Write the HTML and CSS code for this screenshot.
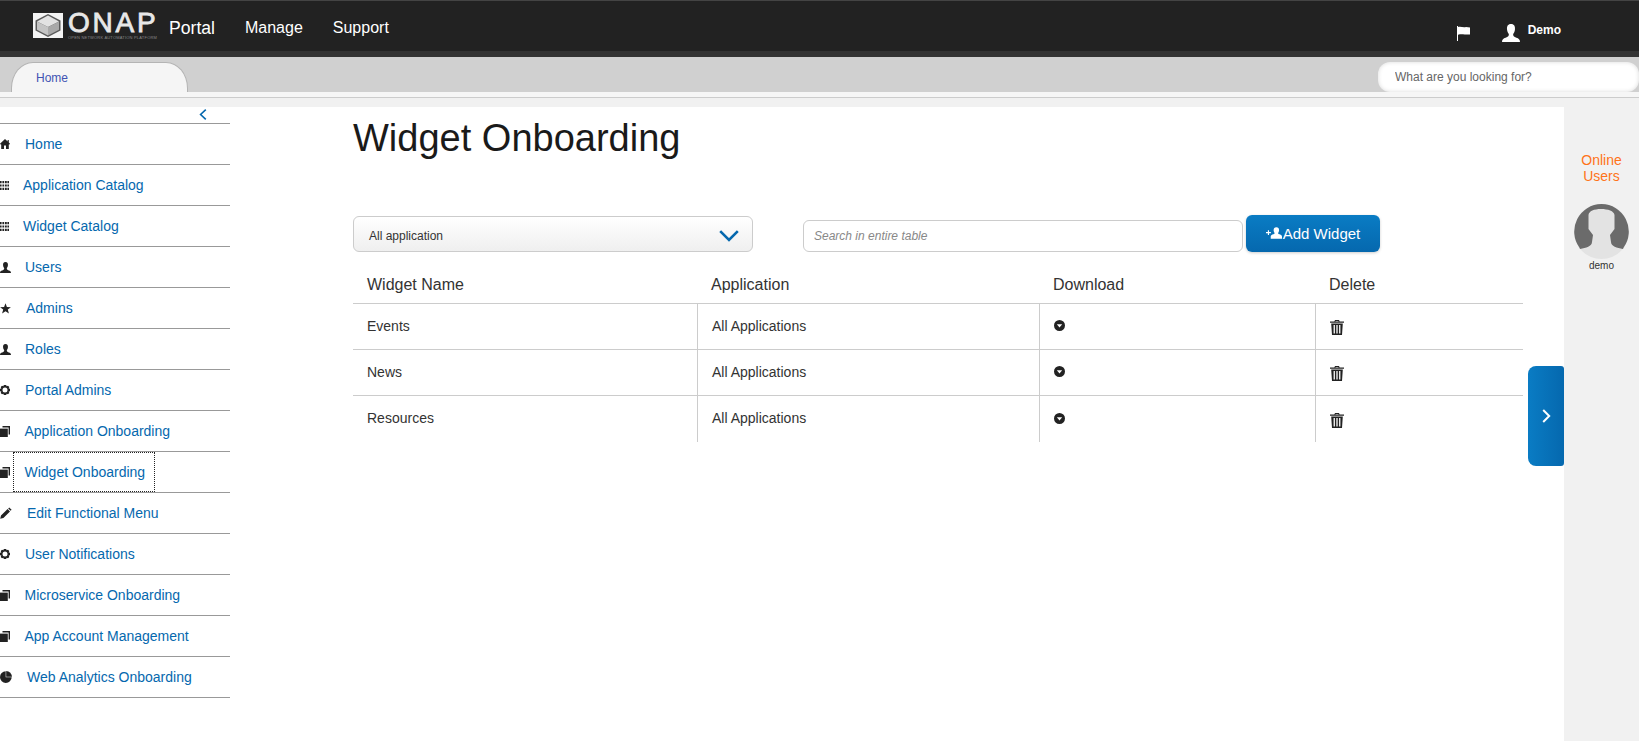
FILE: index.html
```html
<!DOCTYPE html>
<html lang="en">
<head>
    <meta charset="UTF-8">
    <meta name="viewport" content="width=device-width, initial-scale=1.0">
    <title>Widget Onboarding</title>
    <link rel="stylesheet" href="styles.css">
</head>
<body>
    <!-- shared icons -->
    <svg class="sprite" xmlns="http://www.w3.org/2000/svg">
        <symbol id="i-home" viewBox="0 0 10 10"><path d="M5 0 L7.6 2.4 V1 H8.8 V3.5 L10 4.7 L9.4 5.6 H8.8 V10 H6 V6.6 H4 V10 H1.2 V5.6 H.6 L0 4.7 Z"/></symbol>
        <symbol id="i-grid" viewBox="0 0 9 9"><path d="M0 0h1.6v2.2H0zM2.4 0h1.8v2.2H2.4zM5 0h1.8v2.2H5zM7.4 0H9v2.2H7.4zM0 3.4h1.6v2.2H0zM2.4 3.4h1.8v2.2H2.4zM5 3.4h1.8v2.2H5zM7.4 3.4H9v2.2H7.4zM0 6.8h1.6V9H0zM2.4 6.8h1.8V9H2.4zM5 6.8h1.8V9H5zM7.4 6.8H9V9H7.4z"/></symbol>
        <symbol id="i-user" viewBox="0 0 10 10"><path d="M5 0 C6.8 0 7.4 1.4 7.2 3 C7.1 4.2 6.6 5 6.2 5.6 C6.1 6.6 6.6 7.2 8 7.7 C9.2 8.1 10 8.6 10 10 H0 C0 8.6 .8 8.1 2 7.7 C3.4 7.2 3.9 6.6 3.8 5.6 C3.4 5 2.9 4.2 2.8 3 C2.6 1.4 3.2 0 5 0 Z"/></symbol>
        <symbol id="i-star" viewBox="0 0 11 11"><path d="M5.5 .3 L6.9 4 L10.9 4.2 L7.8 6.6 L8.9 10.5 L5.5 8.3 L2.1 10.5 L3.2 6.6 L.1 4.2 L4.1 4 Z"/></symbol>
        <symbol id="i-gear" viewBox="0 0 10 10"><path fill-rule="evenodd" d="M3.8 0 H6.2 L6.6 1.3 L8 .7 L9.3 2 L8.7 3.4 L10 3.8 V6.2 L8.7 6.6 L9.3 8 L8 9.3 L6.6 8.7 L6.2 10 H3.8 L3.4 8.7 L2 9.3 L.7 8 L1.3 6.6 L0 6.2 V3.8 L1.3 3.4 L.7 2 L2 .7 L3.4 1.3 Z M5 2.5 A2.5 2.5 0 1 0 5 7.5 A2.5 2.5 0 1 0 5 2.5 Z"/></symbol>
        <symbol id="i-stack" viewBox="0 0 10 11"><path d="M0 2.6 H7.8 V11 H0 Z"/><path d="M2.5 0 H10 V8.4 H8.6 V1.6 H2.5 Z"/></symbol>
        <symbol id="i-pencil" viewBox="0 0 12 12"><path d="M9.2 .4 L11.6 2.8 L10.6 3.8 L8.2 1.4 Z M7.6 2 L10 4.4 L3.4 11 L.2 11.8 L1 8.6 Z"/></symbol>
        <symbol id="i-pie" viewBox="0 0 12 12"><path d="M5.7 .3 V6.3 H11.7 A5.85 5.85 0 1 1 5.7 .3 Z"/><path d="M6.2 0 A5.8 5.8 0 0 1 12 5.8 H6.2 Z"/></symbol>
        <symbol id="i-down" viewBox="0 0 11 11"><path fill-rule="evenodd" d="M5.5 0 A5.5 5.5 0 1 1 5.5 11 A5.5 5.5 0 1 1 5.5 0 Z M2.8 4.2 L5.5 7.4 L8.2 4.2 Z"/></symbol>
        <symbol id="i-trash" viewBox="0 0 14 15"><path fill-rule="evenodd" d="M5 0 H9 L9.6 1.4 H14 V2.8 H0 V1.4 H4.4 Z M5.6 .9 L5.4 1.4 H8.6 L8.4 .9 Z M1.2 3.6 H12.8 L12 15 H2 Z M3.6 5 V13.4 H4.9 V5 Z M6.35 5 V13.4 H7.65 V5 Z M9.1 5 V13.4 H10.4 V5 Z"/></symbol>
    </svg>

    <header class="top-bar">
        <div class="logo">
            <svg class="logo-mark" viewBox="0 0 30 25" xmlns="http://www.w3.org/2000/svg">
                <path fill="#f4f4f4" d="M0 0 H30 V25 H0 Z"/>
                <path fill="#5a5a5a" d="M15 1 L2.5 7.5 V17.5 L15 24 L27.5 17.5 V7.5 Z"/>
                <path fill="#e2e2e2" d="M15 2.6 L26 8.4 L15 14 L4 8.4 Z"/>
                <path fill="#c4c4c4" d="M4 8.4 L15 14 V22.4 L4 16.8 Z"/>
                <path fill="#a8a8a8" d="M26 8.4 L15 14 V22.4 L26 16.8 Z"/>
            </svg>
            <div class="logo-text">
                <span class="logo-name">ONAP</span>
                <span class="logo-sub">OPEN NETWORK AUTOMATION PLATFORM</span>
            </div>
        </div>
        <nav class="main-nav">
            <a class="main-link portal-link" href="#">Portal</a>
            <a class="main-link" href="#">Manage</a>
            <a class="main-link" href="#">Support</a>
        </nav>
        <div class="user-area">
            <svg class="flag-icon" viewBox="0 0 13 15" xmlns="http://www.w3.org/2000/svg">
                <path d="M0 0 H1 V15 H0 Z"/><path d="M1 1 C4 .2 6 1.8 9 1 L13 1.4 V8.6 L9 8.4 C6 8.6 4 8 1 8.8 Z"/>
            </svg>
            <svg class="user-icon" viewBox="0 0 10 10"><use href="#i-user"/></svg>
            <span class="user-name">Demo</span>
        </div>
    </header>

    <div class="tab-bar">
        <div class="tab">Home</div>
        <input class="global-search" type="text" placeholder="What are you looking for?">
    </div>
    <div class="tab-gap"></div>

    <div class="page">
        <aside class="sidebar">
            <div class="collapse-row">
                <svg class="collapse-icon" viewBox="0 0 8 11" xmlns="http://www.w3.org/2000/svg"><path d="M6.8 .6 L1.6 5.5 L6.8 10.4"/></svg>
            </div>
            <ul class="side-menu">
                <li class="side-item"><svg class="nav-icon"><use href="#i-home"/></svg><a class="side-link" href="#">Home</a></li>
                <li class="side-item"><svg class="nav-icon icon-grid"><use href="#i-grid"/></svg><a class="side-link" href="#">Application Catalog</a></li>
                <li class="side-item"><svg class="nav-icon icon-grid"><use href="#i-grid"/></svg><a class="side-link" href="#">Widget Catalog</a></li>
                <li class="side-item"><svg class="nav-icon icon-user"><use href="#i-user"/></svg><a class="side-link" href="#">Users</a></li>
                <li class="side-item"><svg class="nav-icon icon-star"><use href="#i-star"/></svg><a class="side-link" href="#">Admins</a></li>
                <li class="side-item"><svg class="nav-icon icon-user"><use href="#i-user"/></svg><a class="side-link" href="#">Roles</a></li>
                <li class="side-item"><svg class="nav-icon"><use href="#i-gear"/></svg><a class="side-link" href="#">Portal Admins</a></li>
                <li class="side-item"><svg class="nav-icon icon-stack"><use href="#i-stack"/></svg><a class="side-link" href="#">Application Onboarding</a></li>
                <li class="side-item"><svg class="nav-icon icon-stack"><use href="#i-stack"/></svg><a class="side-link active" href="#">Widget Onboarding</a></li>
                <li class="side-item"><svg class="nav-icon icon-wide"><use href="#i-pencil"/></svg><a class="side-link" href="#">Edit Functional Menu</a></li>
                <li class="side-item"><svg class="nav-icon"><use href="#i-gear"/></svg><a class="side-link" href="#">User Notifications</a></li>
                <li class="side-item"><svg class="nav-icon icon-stack"><use href="#i-stack"/></svg><a class="side-link" href="#">Microservice Onboarding</a></li>
                <li class="side-item"><svg class="nav-icon icon-stack"><use href="#i-stack"/></svg><a class="side-link" href="#">App Account Management</a></li>
                <li class="side-item"><svg class="nav-icon icon-wide"><use href="#i-pie"/></svg><a class="side-link" href="#">Web Analytics Onboarding</a></li>
            </ul>
        </aside>

        <main class="content">
            <h1 class="page-title">Widget Onboarding</h1>

            <div class="toolbar">
                <div class="app-select">
                    <span>All application</span>
                    <svg class="select-arrow" viewBox="0 0 20 12" xmlns="http://www.w3.org/2000/svg"><path d="M1.2 1.2 L10 10 L18.8 1.2"/></svg>
                </div>
                <input class="table-search" type="text" placeholder="Search in entire table">
                <button class="add-button">
                    <svg class="add-icon" viewBox="0 0 17 12" xmlns="http://www.w3.org/2000/svg">
                        <path d="M0 5 H2 V3 H3.2 V5 H5.2 V6.2 H3.2 V8.2 H2 V6.2 H0 Z"/>
                        <path d="M11 0 C13 0 13.9 1.3 13.9 3 C13.9 4.2 13.4 5.2 12.8 5.9 C12.8 6.6 13.4 7 14.6 7.4 C16 7.9 17 8.6 17 10 V12 H5 V10 C5 8.6 6 7.9 7.4 7.4 C8.6 7 9.2 6.6 9.2 5.9 C8.6 5.2 8.1 4.2 8.1 3 C8.1 1.3 9 0 11 0 Z"/>
                    </svg>
                    Add Widget
                </button>
            </div>

            <table class="widget-table">
                <colgroup>
                    <col class="col-name"><col class="col-app"><col class="col-download"><col class="col-delete">
                </colgroup>
                <thead>
                    <tr><th>Widget Name</th><th>Application</th><th>Download</th><th>Delete</th></tr>
                </thead>
                <tbody>
                    <tr>
                        <td>Events</td><td>All Applications</td>
                        <td><svg class="down-icon"><use href="#i-down"/></svg></td>
                        <td><svg class="trash-icon"><use href="#i-trash"/></svg></td>
                    </tr>
                    <tr>
                        <td>News</td><td>All Applications</td>
                        <td><svg class="down-icon"><use href="#i-down"/></svg></td>
                        <td><svg class="trash-icon"><use href="#i-trash"/></svg></td>
                    </tr>
                    <tr>
                        <td>Resources</td><td>All Applications</td>
                        <td><svg class="down-icon"><use href="#i-down"/></svg></td>
                        <td><svg class="trash-icon"><use href="#i-trash"/></svg></td>
                    </tr>
                </tbody>
            </table>

            <div class="drawer-toggle">
                <svg class="drawer-icon" viewBox="0 0 9 14" xmlns="http://www.w3.org/2000/svg"><path d="M1.2 1 L7.2 7 L1.2 13"/></svg>
            </div>
        </main>

        <aside class="online-panel">
            <div class="online-title">Online Users</div>
            <svg class="avatar" viewBox="0 0 55 55" xmlns="http://www.w3.org/2000/svg">
                <circle cx="27.5" cy="27.5" r="27.5" fill="#e3e3e3"/>
                <path fill="#6b6b6b" d="M27.5 0 A27.5 27.5 0 0 0 5.5 43.7 L6 45 C12 44 18 42 18 38 L19 31 L14.5 25 L14.5 11 C15 7 20 5 27 5 C34 5 40 7 40.5 11 L40.5 25 L36 31 L37 38 C37 42 43 44 49 45 L49.5 43.7 A27.5 27.5 0 0 0 27.5 0 Z"/>
            </svg>
            <div class="avatar-name">demo</div>
        </aside>
    </div>
</body>
</html>
```

FILE: styles.css
```css
* {
    box-sizing: border-box;
}

html, body {
    height: 100%;
}

body {
    font-family: 'Liberation Sans', Arial, sans-serif;
    margin: 0;
    padding: 0;
    background-color: #f1f1f1;
    color: #333;
    overflow: hidden;
    display: flex;
    flex-direction: column;
}

a {
    text-decoration: none;
}

.sprite {
    display: none;
}

/* header */
.top-bar {
    display: flex;
    align-items: center;
    height: 57px;
    flex-shrink: 0;
    padding: 0 78px 0 33px;
    background-color: #222;
    border-top: 1px solid #444;
    border-bottom: 6px solid #333;
}

.logo {
    display: flex;
    align-items: flex-start;
    margin-top: 1px;
}

.logo-mark {
    width: 30px;
    height: 25px;
    margin-right: 5px;
}

.logo-text {
    display: flex;
    flex-direction: column;
    width: 92px;
}

.logo-name {
    font-size: 28px;
    line-height: 20px;
    letter-spacing: 2.8px;
    color: #e8e8e8;
    -webkit-text-stroke: 0.8px #e8e8e8;
}

.logo-sub {
    font-size: 4px;
    line-height: 5px;
    margin-top: 2px;
    letter-spacing: 0.2px;
    color: #888;
    white-space: nowrap;
}

.main-nav {
    display: flex;
    align-items: center;
    margin-left: 9px;
    margin-top: 4px;
}

.main-link {
    color: #fff;
    font-size: 16px;
    margin-right: 30px;
}

.portal-link {
    font-size: 17.6px;
}

.user-area {
    display: flex;
    align-items: center;
    margin-left: auto;
    padding-top: 8px;
}

.flag-icon {
    width: 13px;
    height: 15px;
    fill: #fff;
    margin-top: 7px;
    margin-right: 32px;
}

.user-icon {
    width: 18px;
    height: 18px;
    fill: #fff;
    margin-top: 5px;
    margin-right: 8px;
}

.user-name {
    font-size: 12px;
    font-weight: bold;
    color: #fff;
    margin-bottom: 1px;
}

/* tab strip */
.tab-bar {
    display: flex;
    align-items: flex-end;
    height: 35px;
    flex-shrink: 0;
    padding-left: 11px;
    background-color: #d0d0d0;
}

.tab {
    width: 177px;
    height: 30px;
    padding: 8px 0 0 24px;
    font-size: 12px;
    line-height: 14px;
    color: #4153b3;
    background-color: #f5f5f5;
    border: 1px solid #b4b4b4;
    border-bottom: none;
    border-radius: 22px 22px 0 0 / 26px 26px 0 0;
}

.global-search {
    width: 261px;
    height: 30px;
    margin-left: auto;
    padding: 0 0 0 17px;
    font-family: inherit;
    font-size: 12px;
    border: none;
    border-radius: 12px;
    outline: none;
    background-color: #fff;
    box-shadow: inset 0 0 4px rgba(0, 0, 0, 0.15);
}

.global-search::placeholder {
    color: #666;
    opacity: 1;
}

.tab-gap {
    height: 15px;
    flex-shrink: 0;
    border-top: 5px solid #f6f6f6;
    background-color: #f1f1f1;
    box-shadow: inset 0 1px 0 #ccc;
}

/* page */
.page {
    display: flex;
    flex: 1;
    min-height: 0;
}

.sidebar {
    width: 230px;
    flex-shrink: 0;
    background-color: #fff;
}

.collapse-row {
    display: flex;
    justify-content: flex-end;
    height: 17px;
    padding: 2px 23px 0 0;
    border-bottom: 1px solid #999;
}

.collapse-icon {
    width: 8px;
    height: 11px;
    fill: none;
    stroke: #0568ae;
    stroke-width: 1.6;
}

.side-menu {
    list-style: none;
    margin: 0;
    padding: 0;
}

.side-item {
    display: flex;
    align-items: stretch;
    height: 41px;
    border-bottom: 1px solid #999;
}

.nav-icon {
    width: 10px;
    height: 10px;
    flex-shrink: 0;
    align-self: center;
    fill: #222;
    margin-right: 3px;
}

.icon-grid {
    width: 9px;
    height: 9px;
    margin-right: 2px;
}

.icon-user {
    width: 11px;
    height: 11px;
    margin-right: 2px;
}

.icon-star {
    width: 11px;
    height: 11px;
}

.icon-stack {
    height: 11px;
    margin-right: 2.5px;
}

.icon-wide {
    width: 12px;
    height: 12px;
}

.side-link {
    display: flex;
    align-items: center;
    padding: 0 10px 0 12px;
    font-size: 14px;
    color: #0568ae;
}

.side-link.active {
    outline: 1px dotted #222;
    outline-offset: -1px;
}

/* main area */
.content {
    position: relative;
    flex: 1;
    min-width: 0;
    padding: 13px 0 0 123px;
    background-color: #fff;
}

.page-title {
    margin: 0 0 59px;
    font-size: 38px;
    font-weight: normal;
    line-height: 36px;
    color: #1a1a1a;
}

.toolbar {
    display: flex;
    align-items: flex-end;
    height: 37px;
}

.app-select {
    display: flex;
    align-items: center;
    justify-content: space-between;
    width: 400px;
    height: 36px;
    padding: 4px 13px 0 15px;
    margin-right: 50px;
    font-size: 12px;
    color: #333;
    background: linear-gradient(to bottom, #fff, #efefef);
    border: 1px solid #ccc;
    border-radius: 6px;
}

.select-arrow {
    width: 20px;
    height: 12px;
    fill: none;
    stroke: #0568ae;
    stroke-width: 2.6;
}

.table-search {
    width: 440px;
    height: 32px;
    padding: 0 10px;
    font-family: inherit;
    font-size: 12px;
    font-style: italic;
    border: 1px solid #ccc;
    border-radius: 6px;
    outline: none;
}

.table-search::placeholder {
    color: #888;
    opacity: 1;
}

.add-button {
    display: flex;
    align-items: center;
    justify-content: center;
    width: 134px;
    height: 37px;
    margin-left: 3px;
    padding: 0 0 1px;
    font-family: inherit;
    font-size: 15px;
    color: #fff;
    background: linear-gradient(to bottom, #0a7cc4, #0568ae);
    border: none;
    border-radius: 6px;
    box-shadow: 0 1px 3px rgba(0, 0, 0, 0.2);
}

.add-icon {
    width: 16px;
    height: 12px;
    fill: #fff;
    margin-right: 1px;
}

.widget-table {
    width: 1170px;
    table-layout: fixed;
    border-collapse: separate;
    border-spacing: 0;
}

.col-name { width: 344px; }
.col-app { width: 342px; }
.col-download { width: 276px; }
.col-delete { width: 208px; }

.widget-table th {
    height: 52px;
    padding: 0 14px 9px;
    font-size: 16px;
    font-weight: normal;
    line-height: 18px;
    text-align: left;
    vertical-align: bottom;
    color: #333;
    border-bottom: 1px solid #ccc;
}

.widget-table td {
    height: 46px;
    padding: 0 14px 2px;
    font-size: 14px;
    color: #333;
    vertical-align: middle;
    border-bottom: 1px solid #ccc;
}

.widget-table td + td {
    border-left: 1px solid #ccc;
}

.widget-table tbody tr:last-child td {
    border-bottom: none;
}

.down-icon {
    display: block;
    width: 11px;
    height: 11px;
    fill: #222;
}

.trash-icon {
    display: block;
    width: 14px;
    height: 15px;
    margin-top: 4px;
    fill: #222;
}

.drawer-toggle {
    position: absolute;
    top: 259px;
    right: 0;
    display: flex;
    align-items: center;
    justify-content: center;
    width: 36px;
    height: 100px;
    background: linear-gradient(to right, #0a7cc4, #0568ae);
    border-radius: 8px 3px 3px 8px;
}

.drawer-icon {
    width: 9px;
    height: 14px;
    fill: none;
    stroke: #fff;
    stroke-width: 2;
}

/* online users */
.online-panel {
    display: flex;
    flex-direction: column;
    align-items: center;
    width: 75px;
    flex-shrink: 0;
    padding-top: 45px;
}

.online-title {
    width: 60px;
    font-size: 14px;
    line-height: 16px;
    text-align: center;
    color: #ff7318;
}

.avatar {
    width: 55px;
    height: 55px;
    margin-top: 20px;
}

.avatar-name {
    margin-top: 1px;
    font-size: 10px;
    line-height: 12px;
    color: #333;
}
```
